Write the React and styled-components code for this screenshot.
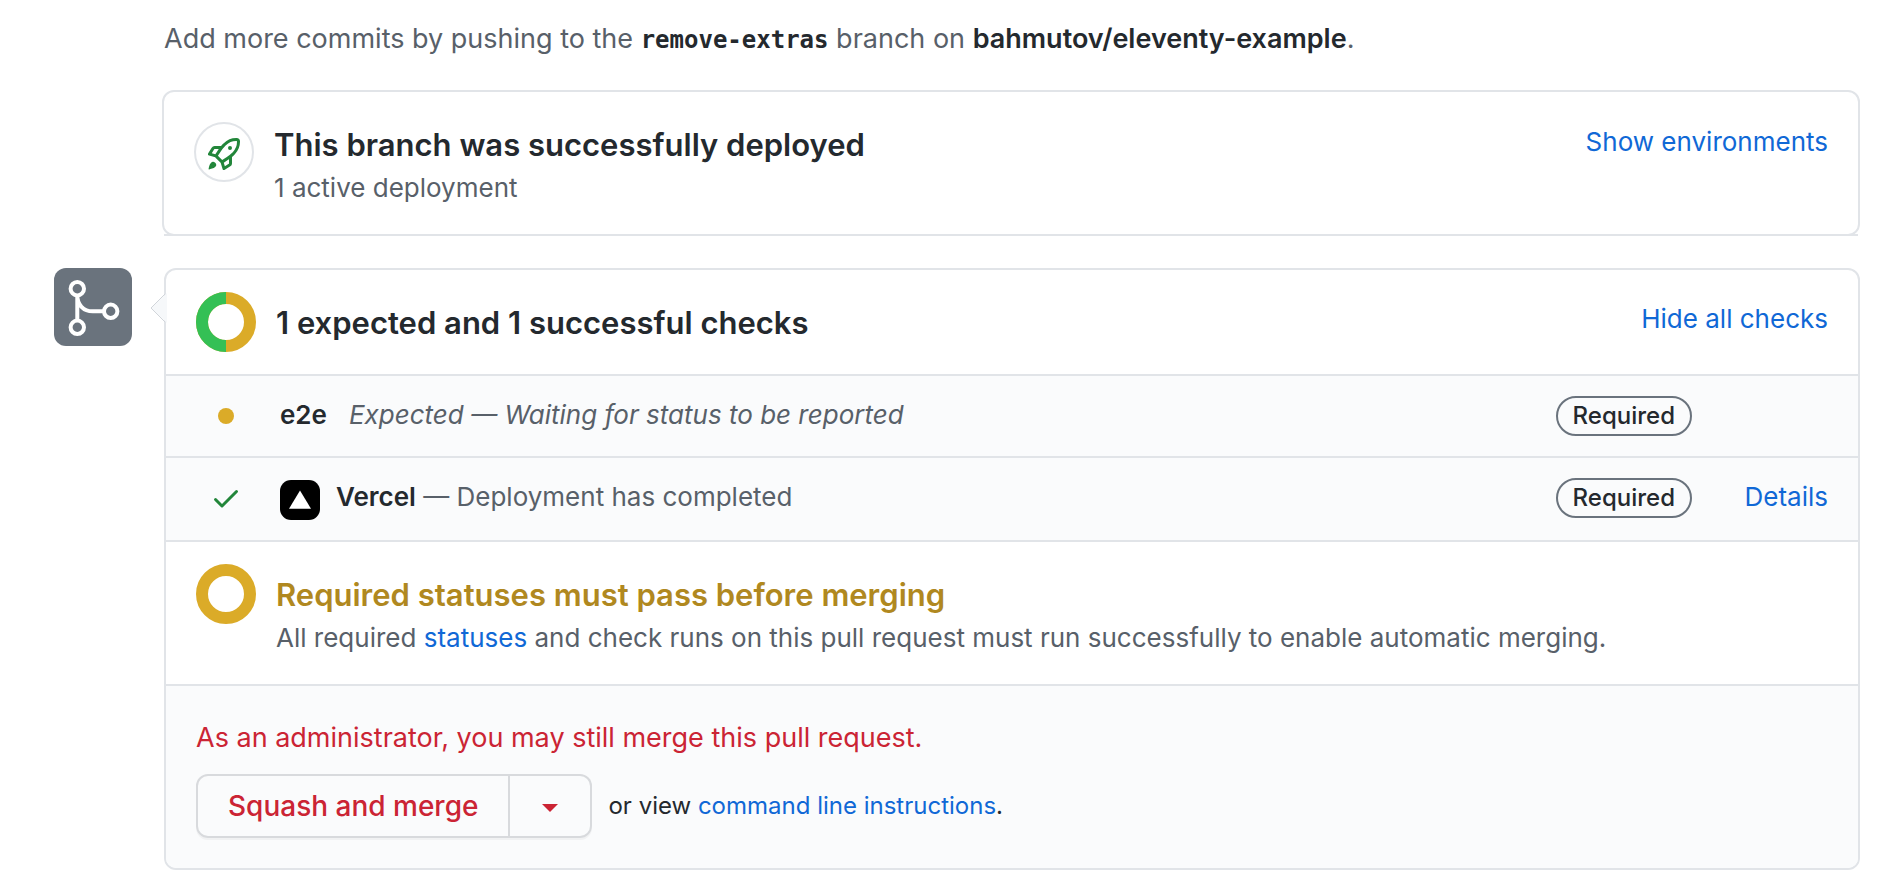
import React from "react";
import styled, { createGlobalStyle } from "styled-components";

const color = {
  text: "#24292e",
  muted: "#586069",
  link: "#1068d6",
  line: "#e1e4e8",
  subtle: "#fafbfc",
  green: "#22863a",
  brightGreen: "#34c055",
  amber: "#dbab28",
  darkAmber: "#b08820",
  red: "#cb2434",
  slate: "#6a737d",
};

const GlobalStyle = createGlobalStyle`
  *, *::before, *::after { box-sizing: border-box; }
  body {
    margin: 0;
    background: #fff;
    color: ${color.text};
    font-family: Inter, "Liberation Sans", sans-serif;
    font-size: 26px;
    line-height: 40px;
  }
`;

const Page = styled.main`
  padding: 19px 36px 22px 54px;
`;

const Column = styled.div`
  margin-left: 108px;
`;

const Intro = styled.p`
  margin: 0 0 31px 2px;
  font-size: 27px;
  line-height: 40px;
  color: ${color.muted};
`;

const Strong = styled.strong`
  font-weight: 600;
  color: ${color.text};
`;

const BranchName = styled.code`
  font-family: "DejaVu Sans Mono", monospace;
  font-size: 24px;
  font-weight: 700;
  line-height: 1;
  color: ${color.text};
`;

const DeployCard = styled.section`
  position: relative;
  border: 2px solid ${color.line};
  border-radius: 12px;

  &::after {
    content: "";
    position: absolute;
    left: 0;
    right: 0;
    bottom: -2px;
    height: 2px;
    background: ${color.line};
  }
`;

const MergeArea = styled.div`
  display: flex;
  align-items: flex-start;
  gap: 32px;
  margin-top: 32px;
`;

const MergeBadge = styled.div`
  flex: none;
  display: flex;
  width: 78px;
  height: 78px;
  border-radius: 12px;
  background: ${color.slate};
`;

const MergeCard = styled.section`
  position: relative;
  flex: 1;
  min-width: 0;
  border: 2px solid ${color.line};
  border-radius: 12px;
`;

const Pointer = styled.svg`
  position: absolute;
  left: -16px;
  top: 22px;
`;

const Section = styled.div`
  display: flex;
  align-items: flex-start;
  gap: 20px;
  padding: ${(p) => (p.$deploy ? "30px 30px 26px" : "22px 30px")};
  min-height: ${(p) => (p.$tall ? "142px" : "0")};
`;

const SectionText = styled.div`
  flex: 1;
  min-width: 0;
  margin-top: ${(p) => (p.$flush ? "0" : "8px")};
`;

const Title = styled.h3`
  margin: 0;
  font-size: 31px;
  font-weight: 600;
  line-height: 46px;
  color: ${(p) => (p.$warning ? color.darkAmber : color.text)};
`;

const Subtitle = styled.p`
  margin: 0;
  color: ${color.muted};
`;

const Link = styled.a`
  color: ${color.link};
  text-decoration: none;
`;

const TextButton = styled.button`
  flex: none;
  margin: ${(p) => (p.$flush ? "0" : "7px")} 0 0;
  padding: 0;
  border: 0;
  background: none;
  font: inherit;
  color: ${color.link};
  cursor: pointer;
`;

const RocketCircle = styled.div`
  flex: none;
  display: grid;
  place-items: center;
  width: 60px;
  height: 60px;
  padding-top: 4px;
  border: 2px solid ${color.line};
  border-radius: 50%;
`;

const Ring = styled.svg`
  flex: none;
  width: 60px;
  height: 60px;
`;

const CheckList = styled.ul`
  margin: 0;
  padding: 0;
  list-style: none;
  border-bottom: 2px solid ${color.line};
`;

const CheckRow = styled.li`
  display: flex;
  align-items: flex-start;
  padding: 20px 30px;
  border-top: 2px solid ${color.line};
  background: ${color.subtle};
`;

const StatusCell = styled.div`
  display: grid;
  place-items: center;
  flex: none;
  width: 60px;
  height: 40px;
  margin-right: 24px;
`;

const Dot = styled.span`
  width: 16px;
  height: 16px;
  border-radius: 50%;
  background: ${color.amber};
`;

const AppLogo = styled.svg`
  flex: none;
  width: 40px;
  height: 40px;
  margin: 2px 16px 0 0;
`;

const CheckText = styled.div`
  flex: 1;
  min-width: 0;
  line-height: 38px;
  color: ${color.muted};
`;

const Pending = styled.em`
  margin-left: 22px;
`;

const Pill = styled.span`
  flex: none;
  padding: 0 15px;
  border: 2px solid ${color.slate};
  border-radius: 20px;
  font-size: 24px;
  font-weight: 500;
  line-height: 36px;
`;

const ActionCell = styled.div`
  flex: none;
  width: 136px;
  line-height: 38px;
  text-align: right;
`;

const Footer = styled.div`
  padding: 30px;
  border-top: 2px solid ${color.line};
  border-radius: 0 0 10px 10px;
  background: ${color.subtle};
`;

const AdminNote = styled.p`
  margin: 0 0 14px;
  font-size: 27px;
  line-height: 44px;
  color: ${color.red};
`;

const Actions = styled.div`
  display: flex;
  align-items: center;
  gap: 16px;
  font-size: 24px;
`;

const ButtonGroup = styled.div`
  display: flex;
  border-radius: 12px;
  box-shadow: 0 2px 0 rgba(27, 31, 35, 0.04);
`;

const MergeButton = styled.button`
  height: 64px;
  padding: 0 30px;
  border: 2px solid #d8dadd;
  border-radius: 12px 0 0 12px;
  background: ${color.subtle};
  font: 500 28px/40px Inter, "Liberation Sans", sans-serif;
  color: ${color.red};
  cursor: pointer;
`;

const MenuButton = styled(MergeButton)`
  display: grid;
  place-items: center;
  width: 82px;
  padding: 4px 0 0;
  border-left: 0;
  border-radius: 0 12px 12px 0;
`;

function Rocket() {
  return (
    <svg width="32" height="32" viewBox="0 0 16 16" fill={color.green} aria-hidden="true">
      <path
        fillRule="evenodd"
        d="M14.064 0a8.75 8.75 0 00-6.187 2.563l-.459.458c-.314.314-.616.641-.904.979H3.31a1.75 1.75 0 00-1.49.833L.11 7.607a.75.75 0 00.418 1.11l3.102.954c.037.051.079.1.124.145l2.429 2.428c.046.046.094.088.145.125l.954 3.102a.75.75 0 001.11.418l2.774-1.707a1.75 1.75 0 00.833-1.49V9.485c.338-.288.665-.59.979-.904l.458-.459A8.75 8.75 0 0016 1.936V1.75A1.75 1.75 0 0014.25 0h-.186zM10.5 10.625c-.088.06-.177.118-.266.175l-2.35 1.521.548 1.783 1.949-1.2a.25.25 0 00.119-.213v-2.066zM3.678 8.116L5.2 5.766c.058-.09.117-.178.176-.266H3.309a.25.25 0 00-.213.119l-1.2 1.95 1.782.547zm5.26-4.493A7.25 7.25 0 0114.063 1.5h.186a.25.25 0 01.25.25v.186a7.25 7.25 0 01-2.123 5.127l-.459.458a15.21 15.21 0 01-2.499 2.02l-2.317 1.5-2.143-2.143 1.5-2.317a15.25 15.25 0 012.02-2.5l.458-.458h.002zM12 5a1 1 0 11-2 0 1 1 0 012 0zm-8.44 9.56a1.5 1.5 0 10-2.12-2.12c-.734.73-1.047 2.332-1.15 3.003a.23.23 0 00.265.265c.671-.103 2.273-.416 3.005-1.148z"
      />
    </svg>
  );
}

function MergeIcon() {
  return (
    <svg width="78" height="78" viewBox="0 0 78 78" fill="none" stroke="#fff" strokeWidth="4" aria-hidden="true">
      <circle cx="23.3" cy="20.7" r="6.7" />
      <circle cx="23.3" cy="59.3" r="6.7" />
      <circle cx="56.7" cy="43.3" r="6.7" />
      <path d="M23.3 27v26M23.3 27.5c0 9 6 15.8 15.5 15.8H50" />
    </svg>
  );
}

function ProgressRing({ done }) {
  return (
    <Ring viewBox="0 0 60 60" fill="none" strokeWidth="12" aria-hidden="true">
      <circle cx="30" cy="30" r="24" stroke={color.amber} />
      {done && <path d="M30 54a24 24 0 010-48" stroke={color.brightGreen} />}
    </Ring>
  );
}

export default function App() {
  return (
    <Page>
      <GlobalStyle />
      <Column>
        <Intro>
          Add more commits by pushing to the <BranchName>remove-extras</BranchName> branch on{" "}
          <Strong>bahmutov/eleventy-example</Strong>.
        </Intro>
        <DeployCard>
          <Section $deploy $tall>
            <RocketCircle>
              <Rocket />
            </RocketCircle>
            <SectionText $flush>
              <Title>This branch was successfully deployed</Title>
              <Subtitle>1 active deployment</Subtitle>
            </SectionText>
            <TextButton $flush type="button">Show environments</TextButton>
          </Section>
        </DeployCard>
      </Column>

      <MergeArea>
        <MergeBadge>
          <MergeIcon />
        </MergeBadge>
        <MergeCard>
          <Pointer width="17" height="32" viewBox="0 0 17 32" aria-hidden="true">
            <path d="M17 1L1 16l16 15z" fill="#f6f8fa" />
            <path d="M15 2L1 16l14 14" fill="none" stroke="#d1d5da" />
          </Pointer>
          <Section>
            <ProgressRing done />
            <SectionText>
              <Title>1 expected and 1 successful checks</Title>
            </SectionText>
            <TextButton type="button">Hide all checks</TextButton>
          </Section>
          <CheckList>
            <CheckRow>
              <StatusCell>
                <Dot />
              </StatusCell>
              <CheckText>
                <Strong>e2e</Strong>
                <Pending>Expected — Waiting for status to be reported</Pending>
              </CheckText>
              <Pill>Required</Pill>
              <ActionCell />
            </CheckRow>
            <CheckRow>
              <StatusCell>
                <svg width="32" height="32" viewBox="0 0 16 16" fill={color.green} aria-hidden="true">
                  <path d="M13.78 4.22a.75.75 0 010 1.06l-7.25 7.25a.75.75 0 01-1.06 0L2.22 9.28a.75.75 0 011.06-1.06L6 10.94l6.72-6.72a.75.75 0 011.06 0z" />
                </svg>
              </StatusCell>
              <AppLogo viewBox="0 0 40 40" aria-hidden="true">
                <rect width="40" height="40" rx="11" />
                <path d="M20 10.5l11 18.3H9z" fill="#fff" />
              </AppLogo>
              <CheckText>
                <Strong>Vercel</Strong> — Deployment has completed
              </CheckText>
              <Pill>Required</Pill>
              <ActionCell>
                <Link href="#details">Details</Link>
              </ActionCell>
            </CheckRow>
          </CheckList>
          <Section $tall>
            <ProgressRing />
            <SectionText>
              <Title $warning>Required statuses must pass before merging</Title>
              <Subtitle>
                All required <Link href="#statuses">statuses</Link> and check runs on this pull request must run
                successfully to enable automatic merging.
              </Subtitle>
            </SectionText>
          </Section>
          <Footer>
            <AdminNote>As an administrator, you may still merge this pull request.</AdminNote>
            <Actions>
              <ButtonGroup>
                <MergeButton type="button">Squash and merge</MergeButton>
                <MenuButton type="button" aria-label="Select merge method">
                  <svg width="16" height="8" viewBox="0 0 16 8" fill={color.red} aria-hidden="true">
                    <path d="M0 0h16L8 8z" />
                  </svg>
                </MenuButton>
              </ButtonGroup>
              <span>
                or view <Link href="#command-line">command line instructions</Link>.
              </span>
            </Actions>
          </Footer>
        </MergeCard>
      </MergeArea>
    </Page>
  );
}
